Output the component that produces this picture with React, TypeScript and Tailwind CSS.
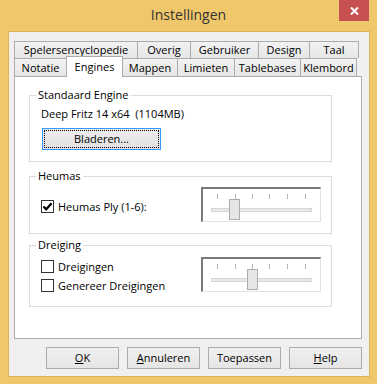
import React from "react";

interface TabProps {
  label: string;
  width: string;
  edge: string;
}

const Tab: React.FC<TabProps> = ({ label, width, edge }) => {
  return (
    <div
      className={`flex h-full items-center justify-center border-t border-[#acacac] bg-linear-to-b from-[#f2f2f2] to-[#e6e6e6] leading-[16px] ${width} ${edge}`}
    >
      {label}
    </div>
  );
};

const CheckBox: React.FC<{ checked?: boolean }> = ({ checked }) => {
  return (
    <span className="flex h-[13px] w-[13px] shrink-0 items-center justify-center border border-[#333333] bg-white">
      {checked && (
        <svg width="11" height="11" viewBox="0 0 11 11">
          <path d="M1.5 5.5 L4.2 8.3 L9.6 2.2" stroke="#000" strokeWidth="2.2" fill="none" />
        </svg>
      )}
    </span>
  );
};

const Trackbar: React.FC<{ thumbX: number }> = ({ thumbX }) => {
  const ticks = [14, 32, 49, 66, 84, 102];
  return (
    <div className="h-[35px] w-[120px] border-t-2 border-l-2 border-r border-b border-t-[#7a7a7a] border-l-[#7a7a7a] border-r-[#e3e3e3] border-b-[#e3e3e3] bg-white">
      <svg width="117" height="32" viewBox="0 0 117 32" className="block">
        {ticks.map((x) => (
          <rect key={x} x={x} y={5} width={1} height={5} fill="#b4b4b4" />
        ))}
        <rect x="8.5" y="19.5" width="100" height="3" fill="#e7eaea" stroke="#d6d6d6" />
        <rect x={thumbX + 0.5} y="10.5" width="10" height="20" fill="#e6e6e6" stroke="#acacac" />
      </svg>
    </div>
  );
};

const DlgButton: React.FC<{ children: React.ReactNode }> = ({ children }) => {
  return (
    <button
      type="button"
      className="flex h-[22px] w-[73px] items-center justify-center border border-[#acacac] bg-linear-to-b from-[#f0f0f0] to-[#e5e5e5] leading-[16px] text-black"
    >
      {children}
    </button>
  );
};

export default function App() {
  return (
    <div className="h-[384px] w-[377px] overflow-hidden bg-[#f0c86b] font-['Open_Sans',sans-serif] text-[11px] text-black">
      {/* title bar */}
      <div className="grid h-[31px] grid-cols-[1fr_auto_1fr]">
        <div />
        <div className="pt-[5px] text-[14px] leading-[20px] text-[#333333]">Instellingen</div>
        <div className="flex justify-end pr-[8px]">
          <div className="flex h-[21px] w-[30px] items-center justify-center bg-[#c75050]">
            <svg width="9" height="8" viewBox="0 0 9 8">
              <path d="M1 0.5 L8 7.5 M8 0.5 L1 7.5" stroke="#fff" strokeWidth="2" />
            </svg>
          </div>
        </div>
      </div>

      {/* client area */}
      <div className="ml-[8px] h-[346px] w-[362px] border border-[#d9b35f] bg-[#f0f0f0] pl-[5px] pt-[9px]">
        <div className="flex h-[17px]">
          <Tab label="Spelersencyclopedie" width="w-[123px]" edge="border-l" />
          <Tab label="Overig" width="w-[53px]" edge="border-l" />
          <Tab label="Gebruiker" width="w-[68px]" edge="border-l" />
          <Tab label="Design" width="w-[51px]" edge="border-l" />
          <Tab label="Taal" width="w-[50px]" edge="border-l border-r" />
        </div>
        <div className="relative z-10 flex h-[18px] items-end">
          <div className="h-[18px]">
            <Tab label="Notatie" width="w-[52px]" edge="border-l" />
          </div>
          <div className="mb-[-1px] flex h-[21px] w-[57px] items-center justify-center border-x border-t border-[#acacac] bg-white pb-[1px] leading-[16px]">
            Engines
          </div>
          <div className="h-[18px]">
            <Tab label="Mappen" width="w-[54px]" edge="" />
          </div>
          <div className="h-[18px]">
            <Tab label="Limieten" width="w-[57px]" edge="border-l" />
          </div>
          <div className="h-[18px]">
            <Tab label="Tablebases" width="w-[66px]" edge="border-l" />
          </div>
          <div className="h-[18px]">
            <Tab label="Klembord" width="w-[57px]" edge="border-l border-r" />
          </div>
        </div>

        {/* tab page */}
        <div className="h-[263px] w-[348px] border border-[#acacac] bg-white">
          <fieldset className="ml-[14px] mt-[10px] w-[303px] border border-[#dcdcdc]">
            <legend className="ml-[6px] px-[2px] leading-[16px]">Standaard Engine</legend>
            <div className="px-[11px] pb-[11px] pt-[3px]">
              <div className="whitespace-pre leading-[16px]">Deep Fritz 14 x64  (1104MB)</div>
              <button
                type="button"
                className="ml-[1px] mt-[6px] block h-[22px] w-[119px] border border-[#3399ff] bg-linear-to-b from-[#ececec] to-[#e2e2e2] p-[1px]"
              >
                <span className="flex h-full w-full items-center justify-center border border-dotted border-black leading-[16px]">
                  Bladeren...
                </span>
              </button>
            </div>
          </fieldset>

          <fieldset className="ml-[14px] mt-[6px] w-[303px] border border-[#dcdcdc]">
            <legend className="ml-[6px] px-[2px] leading-[16px]">Heumas</legend>
            <div className="flex justify-between pb-[11px] pl-[11px] pr-[10px] pt-[3px]">
              <div className="pt-[10px]">
                <label className="flex h-[19px] items-center gap-[4px] leading-[16px]">
                  <CheckBox checked />
                  Heumas Ply (1-6):
                </label>
              </div>
              <Trackbar thumbX={26} />
            </div>
          </fieldset>

          <fieldset className="ml-[14px] mt-[3px] w-[303px] border border-[#dcdcdc]">
            <legend className="ml-[6px] px-[2px] leading-[16px]">Dreiging</legend>
            <div className="flex justify-between pb-[11px] pl-[11px] pr-[10px] pt-[4px]">
              <div className="flex flex-col">
                <label className="flex h-[19px] items-center gap-[4px] leading-[16px]">
                  <CheckBox />
                  Dreigingen
                </label>
                <label className="flex h-[19px] items-center gap-[4px] leading-[16px]">
                  <CheckBox />
                  Genereer Dreigingen
                </label>
              </div>
              <Trackbar thumbX={44} />
            </div>
          </fieldset>
        </div>

        {/* buttons */}
        <div className="ml-[32px] mt-[8px] flex gap-[8px]">
          <DlgButton>
            <u>O</u>K
          </DlgButton>
          <DlgButton>
            <u>A</u>nnuleren
          </DlgButton>
          <DlgButton>Toepassen</DlgButton>
          <DlgButton>
            <u>H</u>elp
          </DlgButton>
        </div>
      </div>
    </div>
  );
}
